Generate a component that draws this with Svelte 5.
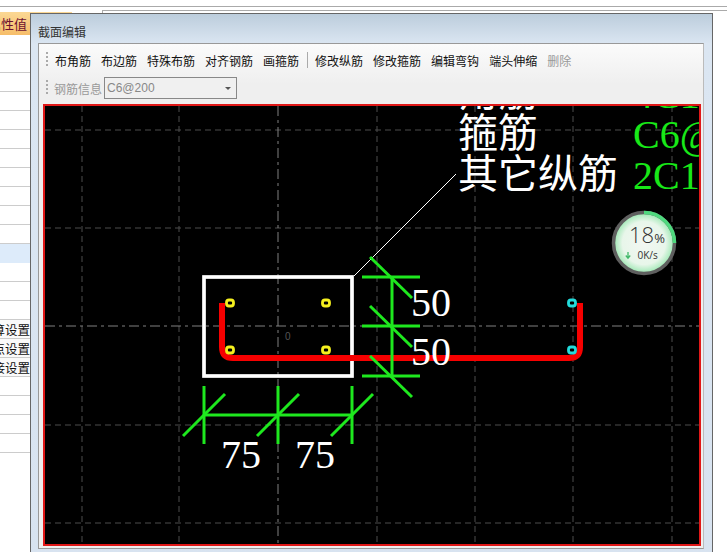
<script lang="ts">
	const rows = [
		'', '', '', '', '', '', '', '', '', '', '',
		'', '', '', '', '算设置', '点设置', '接设置', '', '', '', ''
	];
	const toolsA = ['布角筋', '布边筋', '特殊布筋', '对齐钢筋', '画箍筋'];
	const toolsB = ['修改纵筋', '修改箍筋', '编辑弯钩', '端头伸缩'];

	const vLines = [82, 179, 377, 475, 573, 672];
	const hLines = [130, 228, 425, 523];
	const yellowBars = [[230, 303], [326, 303], [230, 350], [326, 350]];
	const cyanBars = [[572, 303], [572, 350]];

	const rightTicks = [277, 326, 376];
	const bottomTicks = [204, 278, 352];
</script>

<div class="page">
	<div class="top-lines"></div>
	<div class="main">
		<div class="side">
			<div class="side-head"><span>属性值</span></div>
			{#each rows as row, i}
				<div class="side-row" class:selected={i === 11} class:tinted={row !== ''}>{row}</div>
			{/each}
		</div>

		<div class="window">
			<div class="title">截面编辑</div>
			<div class="panel">
				<div class="toolbar">
					<i class="grip"></i>
					{#each toolsA as t}<span class="tool">{t}</span>{/each}
					<i class="sep"></i>
					{#each toolsB as t}<span class="tool">{t}</span>{/each}
					<span class="tool disabled">删除</span>
				</div>
				<div class="toolbar second">
					<i class="grip"></i>
					<span class="label">钢筋信息</span>
					<div class="combo">
						<span>C6@200</span>
						<i class="caret"></i>
					</div>
				</div>
				<div class="canvas">
					<svg width="654" height="438" viewBox="45 106 654 438">
						<defs>
							<radialGradient id="disc">
								<stop offset="0" stop-color="#f2f7f2" />
								<stop offset="0.72" stop-color="#e8f6ea" />
								<stop offset="1" stop-color="#9fe8b4" />
							</radialGradient>
						</defs>

						<g class="grid">
							{#each vLines as x}
								<line x1={x} y1="106" x2={x} y2="544" />
							{/each}
							{#each hLines as y}
								<line x1="45" y1={y} x2="699" y2={y} />
							{/each}
						</g>
						<g class="axis">
							<line x1="278" y1="106" x2="278" y2="544" />
							<line x1="45" y1="326" x2="699" y2="326" />
						</g>

						<text class="cad" x="458" y="106">角筋</text>
						<text class="cad" x="458" y="147">箍筋</text>
						<text class="cad" x="458" y="188">其它纵筋</text>
						<text class="cad green" x="633" y="108">4C14</text>
						<text class="cad green" x="633" y="148">C6@200</text>
						<text class="cad green" x="633" y="189">2C16</text>

						<line class="leader" x1="354" y1="276" x2="456" y2="174" />
						<rect class="section" x="204" y="277" width="148" height="99" />
						<text class="origin" x="285" y="340">0</text>

						<path class="rebar" d="M222 303V347Q222 358 233 358H569Q580 358 580 347V303" />

						{#each yellowBars as [x, y]}
							<rect class="bar yellow" x={x - 3.5} y={y - 3} width="7" height="6" rx="2.500" />
						{/each}
						{#each cyanBars as [x, y]}
							<rect class="bar cyan" x={x - 3.5} y={y - 3} width="7" height="6" rx="2.500" />
						{/each}

						<g class="dim">
							<line x1="392" y1="277" x2="392" y2="376" />
							{#each rightTicks as y}
								<line x1="362" y1={y} x2="420" y2={y} />
								<line x1="370" y1={y - 20} x2="412" y2={y + 21} />
							{/each}
							<line x1="204" y1="415" x2="352" y2="415" />
							{#each bottomTicks as x}
								<line x1={x} y1="386" x2={x} y2="444" />
								<line x1={x - 21} y1="436" x2={x + 21} y2="394" />
							{/each}
						</g>

						<text class="num" x="411" y="316">50</text>
						<text class="num" x="411" y="365">50</text>
						<text class="num" x="221" y="468">75</text>
						<text class="num" x="295" y="468">75</text>

						<g class="gauge">
							<circle class="disc" cx="644" cy="243" r="30" fill="url(#disc)" />
							<circle class="ring" cx="644" cy="243" r="30.500" />
							<path class="arc" d="M644 212.500A30.500 30.500 0 0 1 674.500 243" />
							<text class="pct" x="629" y="243">18<tspan class="pct-sign">%</tspan></text>
							<path class="arrow" d="M628 252V258M625.800 255.500L628 258.300L630.200 255.500" />
							<text class="rate" x="637.500" y="258.500">0K/s</text>
						</g>
					</svg>
				</div>
			</div>
		</div>
	</div>
</div>

<style>
	:global(body) {
		margin: 0;
		background: #fff;
	}

	.page {
		width: 727px;
		height: 552px;
		overflow: hidden;
		background: #fff;
		font-family: "Noto Sans CJK SC", "Liberation Sans", sans-serif;
	}

	.top-lines {
		height: 13px;
		background: linear-gradient(#aaa, #aaa) 0 6px / 100% 1px no-repeat,
			linear-gradient(#aaa, #aaa) 102px 10px / 100% 1px no-repeat,
			linear-gradient(#aaa, #aaa) 102px 10px / 1px 3px no-repeat,
			linear-gradient(#fbd793, #fbd793) 0 12px / 72px 1px no-repeat;
	}

	.main {
		display: flex;
		align-items: flex-start;
	}

	.side {
		width: 30px;
		flex: none;
		overflow: hidden;
	}

	.side-head {
		height: 22px;
		background: linear-gradient(#fbd793, #f6bd69);
		color: #6d1030;
		font-size: 13px;
		line-height: 21px;
		display: flex;
		justify-content: flex-end;
		white-space: nowrap;
		padding-right: 3px;
	}

	.side-row {
		box-sizing: border-box;
		height: 19px;
		border-bottom: 1px solid #ccc;
		font-size: 12.500px;
		line-height: 19px;
		color: #111;
		white-space: nowrap;
		display: flex;
		justify-content: flex-end;
	}

	.side-row.selected {
		background: #ddebfa;
		border-bottom-color: #ddebfa;
	}

	.side-row.tinted {
		background: #fafafa;
	}

	.window {
		box-sizing: border-box;
		width: 683px;
		height: 560px;
		flex: none;
		border: 1px solid #666;
		background: linear-gradient(#bccddc, #dbe6f2 30px, #d8e3f0);
		padding-left: 7px;
		padding-right: 8px;
	}

	.title {
		height: 29px;
		font-size: 12px;
		line-height: 35px;
		color: #333;
	}

	.panel {
		box-sizing: border-box;
		height: 506px;
		border: 1px solid #999;
		border-right-color: #bbb;
		background: linear-gradient(#fbfbfb, #efefef 40px);
		padding: 1px 2px 2px 4px;
	}

	.toolbar {
		height: 30px;
		padding-left: 3px;
		display: flex;
		align-items: center;
		gap: 10px;
		font-size: 12px;
		color: #111;
		white-space: nowrap;
	}

	.toolbar.second {
		height: 22px;
		margin: 2px 0 5px;
		gap: 2px;
	}

	.grip {
		width: 2px;
		height: 16px;
		margin-right: -3px;
		background: repeating-linear-gradient(#aaa 0 2px, transparent 2px 4px);
	}

	.toolbar.second .grip {
		margin-right: 4px;
	}

	.sep {
		width: 1px;
		height: 16px;
		margin: 0 -3px 0 -2px;
		background: #aaa;
	}

	.tool.disabled,
	.label {
		color: #999;
	}

	.combo {
		box-sizing: border-box;
		width: 133px;
		height: 22px;
		border: 1px solid #888;
		background: #f0f0f0;
		display: flex;
		align-items: center;
		justify-content: space-between;
		padding: 0 5px 0 2px;
		color: #888;
		font-family: "Liberation Sans", sans-serif;
		font-size: 12px;
	}

	.caret {
		width: 0;
		height: 0;
		border: 3px solid transparent;
		border-top-color: #555;
		border-bottom: 0;
	}

	.canvas {
		width: 654px;
		height: 438px;
		border: 2px solid #e01818;
		background: #000;
	}

	svg {
		display: block;
	}

	.grid line {
		stroke: #4c4c4c;
		stroke-width: 1;
		stroke-dasharray: 6 4;
	}

	.axis line {
		stroke: #808080;
		stroke-width: 1;
		stroke-dasharray: 10 4 3 4;
	}

	.cad {
		font-family: "Noto Sans CJK SC", sans-serif;
		font-size: 40px;
		fill: #fff;
	}

	.cad.green {
		font-family: "Liberation Serif", serif;
		fill: #18e818;
	}

	.leader {
		stroke: #fff;
		stroke-width: 1;
	}

	.section {
		fill: none;
		stroke: #fff;
		stroke-width: 3.700;
	}

	.origin {
		font-family: "Liberation Sans", sans-serif;
		font-size: 10px;
		fill: #555;
	}

	.rebar {
		fill: none;
		stroke: #f60000;
		stroke-width: 6;
	}

	.bar {
		fill: #000;
		stroke-width: 2.800;
	}

	.bar.yellow {
		stroke: #f5f01e;
	}

	.bar.cyan {
		stroke: #22dcdc;
	}

	.dim line {
		stroke: #1ee81e;
		stroke-width: 3;
	}

	.num {
		font-family: "Liberation Serif", serif;
		font-size: 40px;
		fill: #fff;
	}

	.ring {
		fill: none;
		stroke: #5f5f5f;
		stroke-width: 3.500;
	}

	.arc {
		fill: none;
		stroke: #4fd97e;
		stroke-width: 3.500;
	}

	.pct {
		font-family: "Open Sans", sans-serif;
		font-weight: 300;
		font-size: 22px;
		fill: #333;
	}

	.pct-sign {
		font-size: 13px;
		font-weight: 400;
	}

	.arrow {
		fill: none;
		stroke: #3fb868;
		stroke-width: 1.300;
	}

	.rate {
		font-family: "Open Sans", sans-serif;
		font-size: 10px;
		fill: #333;
	}
</style>
